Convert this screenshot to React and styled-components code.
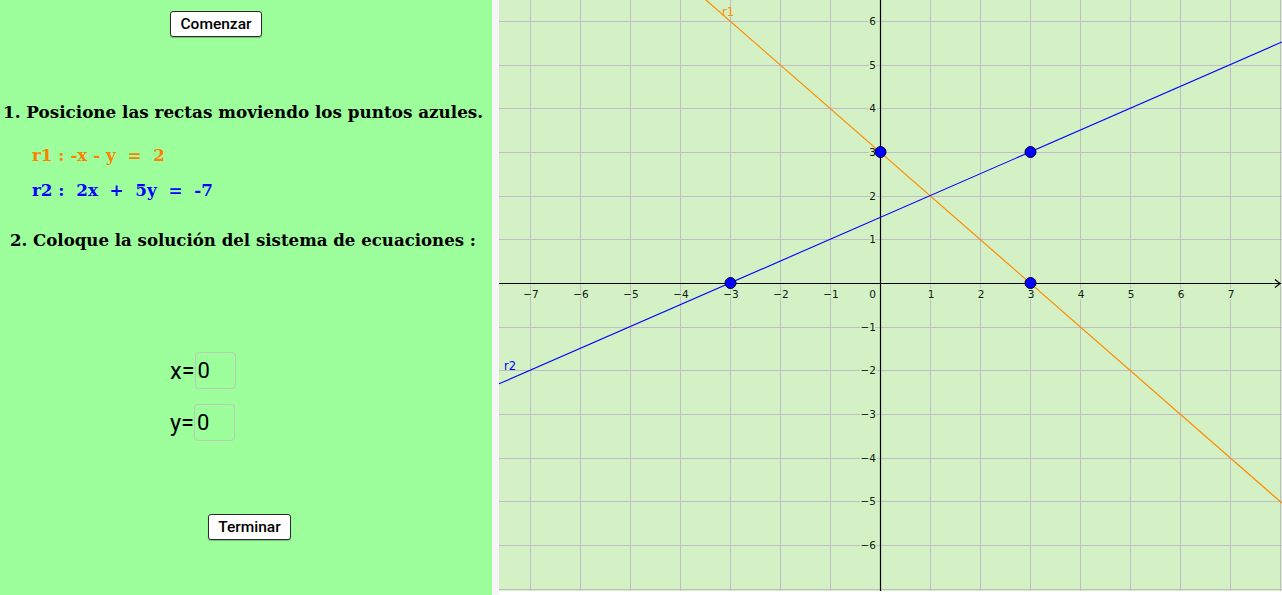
import React from "react";
import styled, { createGlobalStyle } from "styled-components";

const GlobalStyle = createGlobalStyle`
  html, body {
    margin: 0;
    padding: 0;
    background: #ffffff;
  }
  #root {
    width: 1282px;
    height: 595px;
  }
`;

const Page = styled.div`
  display: flex;
  width: 1282px;
  height: 595px;
  overflow: hidden;
`;

const LeftPanel = styled.section`
  width: 492px;
  flex: none;
  background: #9cff9c;
  display: flex;
  flex-direction: column;
  align-items: flex-start;
`;

const Divider = styled.div`
  width: 7px;
  flex: none;
  background: #f6f6f6;
`;

const GraphPane = styled.div`
  flex: 1;
  height: 591px;
  background: #d3f1c4;
  overflow: hidden;
`;

const Button = styled.button`
  margin-top: ${(p) => p.$top}px;
  margin-left: ${(p) => p.$left}px;
  width: ${(p) => p.$w}px;
  height: 26px;
  padding: 0;
  background: #ffffff;
  border: 1px solid #2a2a2a;
  border-radius: 3px;
  font-family: Roboto, "Liberation Sans", sans-serif;
  font-weight: 500;
  font-size: 15.5px;
  color: #000;
  box-shadow: 0 1px 1px rgba(0, 0, 0, 0.25);
`;

const Statement = styled.div`
  margin-top: ${(p) => p.$top}px;
  margin-left: ${(p) => p.$left}px;
  font-family: "DejaVu Serif", "Liberation Serif", serif;
  font-weight: bold;
  font-size: ${(p) => p.$size || 16.8}px;
  line-height: 20px;
  color: ${(p) => p.$color || "#000"};
  white-space: pre;
`;

const AnswerRow = styled.div`
  margin-top: ${(p) => p.$top}px;
  margin-left: 170px;
  display: flex;
  align-items: center;
  font-family: Roboto, "Liberation Sans", sans-serif;
  font-size: 23.5px;
  color: #000;
`;

const AnswerBox = styled.div`
  width: 37px;
  height: 35px;
  border: 1px solid #b9ccb5;
  border-radius: 4px;
  display: flex;
  align-items: center;
  padding-left: 2px;
  box-sizing: content-box;
  font-size: 22px;
`;

const OX = 381;
const OY = 283;
const UX = 50;
const UY = 43.667;
const W = 783;
const H = 591;

const px = (x) => OX + x * UX;
const py = (y) => OY - y * UY;

function Graph() {
  const xs = [];
  for (let i = -7; i <= 8; i++) xs.push(i);
  const ys = [];
  for (let j = -7; j <= 6; j++) ys.push(j);
  const fmt = (n) => (n < 0 ? "\u2212" + Math.abs(n) : String(n));

  // r1 passes through (0,3),(3,0): y = 3 - x
  const r1 = (x) => 3 - x;
  // r2 passes through (-3,0),(3,3): y = 0.5x + 1.5
  const r2 = (x) => 0.5 * x + 1.5;
  const xl = -OX / UX;
  const xr = (W - OX) / UX;

  const points = [
    [0, 3],
    [3, 3],
    [-3, 0],
    [3, 0],
  ];

  return (
    <svg width={W} height={H} viewBox={`0 0 ${W} ${H}`}>
      <g stroke="#c0bdc6" strokeWidth="1">
        {xs.map((i) => (
          <line key={"v" + i} x1={px(i) + 0.5} y1={0} x2={px(i) + 0.5} y2={H} />
        ))}
        {ys.map((j) => (
          <line key={"h" + j} x1={0} y1={Math.round(py(j)) + 0.5} x2={W} y2={Math.round(py(j)) + 0.5} />
        ))}
      </g>

      <g stroke="#000" strokeWidth="1.2" fill="none">
        <line x1={0} y1={OY + 0.5} x2={W - 1} y2={OY + 0.5} />
        <line x1={OX + 0.5} y1={0} x2={OX + 0.5} y2={H} />
        <polyline points={`${W - 7},${OY - 3.5} ${W - 2},${OY + 0.5} ${W - 7},${OY + 4.5}`} />
      </g>

      <g
        fontFamily="'DejaVu Sans', sans-serif"
        fontSize="10.5"
        fill="#102010"
        stroke="#d3f1c4"
        strokeWidth="3"
        paintOrder="stroke"
      >
        {xs.filter((i) => i !== 0 && i !== 8).map((i) => (
          <text key={"lx" + i} x={px(i) + 1} y={OY + 15} textAnchor="middle">
            {fmt(i)}
          </text>
        ))}
        {ys.filter((j) => j !== 0 && j !== -7).map((j) => (
          <text key={"ly" + j} x={OX - 4} y={py(j) + 4} textAnchor="end">
            {fmt(j)}
          </text>
        ))}
        <text x={OX - 4} y={OY + 15} textAnchor="end">0</text>
      </g>

      <line x1={px(xl)} y1={py(r1(xl))} x2={px(xr)} y2={py(r1(xr))} stroke="#ff8c00" strokeWidth="1.2" />
      <line x1={px(xl)} y1={py(r2(xl))} x2={px(xr)} y2={py(r2(xr))} stroke="#0000ff" strokeWidth="1.1" />

      <text x={223} y={16} fontFamily="'DejaVu Sans', sans-serif" fontSize="11.5" fill="#ff8c00">r1</text>
      <text x={5} y={370} fontFamily="'DejaVu Sans', sans-serif" fontSize="11.5" fill="#0000ff">r2</text>

      {points.map(([x, y], k) => (
        <circle key={k} cx={px(x) + 0.5} cy={py(y)} r="5.5" fill="#0000ff" stroke="#000033" strokeWidth="1" />
      ))}
    </svg>
  );
}

export default function App() {
  return (
    <>
      <GlobalStyle />
      <Page>
        <LeftPanel>
          <Button $top={11} $left={170} $w={92}>Comenzar</Button>
          <Statement $top={65} $left={3}>1. Posicione las rectas moviendo los puntos azules.</Statement>
          <Statement $top={23} $left={32} $color="#ff8000">{"r1 : -x - y  =  2"}</Statement>
          <Statement $top={15} $left={32} $color="#0000ff">{"r2 :  2x  +  5y  =  -7"}</Statement>
          <Statement $top={30} $left={10} $size={16.6}>2. Coloque la solución del sistema de ecuaciones :</Statement>
          <AnswerRow $top={102}>
            x=<AnswerBox>0</AnswerBox>
          </AnswerRow>
          <AnswerRow $top={15}>
            y=<AnswerBox>0</AnswerBox>
          </AnswerRow>
          <Button $top={73} $left={208} $w={83}>Terminar</Button>
        </LeftPanel>
        <Divider />
        <GraphPane>
          <Graph />
        </GraphPane>
      </Page>
    </>
  );
}
